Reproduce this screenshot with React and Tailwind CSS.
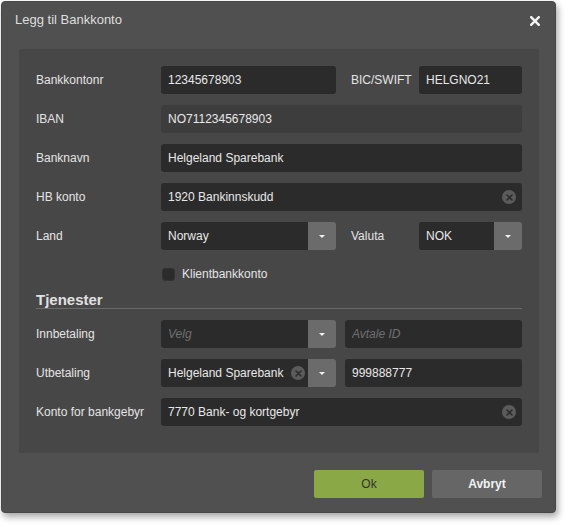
import React from "react";

function ClearIcon() {
  return (
    <span className="flex h-[14px] w-[14px] shrink-0 items-center justify-center rounded-full bg-[#5b5b5b]">
      <svg width="7" height="7" viewBox="0 0 7 7">
        <path d="M1 1L6 6M6 1L1 6" stroke="#2c2c2c" strokeWidth="1.6" strokeLinecap="round" />
      </svg>
    </span>
  );
}

function Caret() {
  return (
    <span className="h-0 w-0 border-l-[3px] border-r-[3px] border-t-[3px] border-l-transparent border-r-transparent border-t-[#f0f0f0]" />
  );
}

function Input({ value, placeholder, className = "", disabled = false, clear = false }) {
  return (
    <div
      className={`flex h-[28px] items-center rounded-[3px] pl-[7px] pr-[6px] ${
        disabled ? "bg-[#3d3d3d]" : "bg-[#2b2b2b]"
      } ${className}`}
    >
      {value ? (
        <span className="flex-1 truncate text-[12px] text-[#e8e8e8]">{value}</span>
      ) : (
        <span className="flex-1 truncate text-[12px] italic text-[#707070]">{placeholder}</span>
      )}
      {clear && <ClearIcon />}
    </div>
  );
}

function Select({ value, placeholder, className = "", clear = false }) {
  return (
    <div className={`flex h-[28px] overflow-hidden rounded-[3px] ${className}`}>
      <div className="flex flex-1 items-center bg-[#2b2b2b] pl-[7px] pr-[3px]">
        {value ? (
          <span className="flex-1 truncate text-[12px] text-[#e8e8e8]">{value}</span>
        ) : (
          <span className="flex-1 truncate text-[12px] italic text-[#707070]">{placeholder}</span>
        )}
        {clear && <ClearIcon />}
      </div>
      <div className="flex w-[28px] shrink-0 items-center justify-center bg-[#6b6b6b]">
        <Caret />
      </div>
    </div>
  );
}

function Row({ label, children, className = "" }) {
  return (
    <div className={`flex h-[28px] items-center ${className}`}>
      <div className="mb-[1px] w-[125px] shrink-0 text-[12px] text-[#e4e4e4]">{label}</div>
      <div className="flex flex-1 items-center">{children}</div>
    </div>
  );
}

export default function App() {
  return (
    <div className="h-[527px] w-[570px] bg-white pl-[1px] pt-[1px] font-['Liberation_Sans',Arial,sans-serif]">
      <div className="flex h-[512px] w-[555px] flex-col rounded-[4px] border border-[#474747] bg-[#505050] shadow-[2px_4px_7px_rgba(0,0,0,0.35)]">
        <div className="flex h-[47px] shrink-0 items-start justify-between pl-[13px] pr-[15px] pt-[9px]">
          <span className="text-[13px] leading-[18px] text-[#dedede]">Legg til Bankkonto</span>
          <svg width="10" height="10" viewBox="0 0 10 10" className="mt-[5px]">
            <path d="M1.2 1.2L8.8 8.8M8.8 1.2L1.2 8.8" stroke="#f2f2f2" strokeWidth="2.4" strokeLinecap="square" />
          </svg>
        </div>

        <div className="ml-[17px] w-[520px] rounded-[2px] bg-[#474747] px-[17px] pb-[27px] pt-[17px]">
          <div className="flex flex-col gap-[11px]">
            <Row label="Bankkontonr">
              <Input value="12345678903" className="w-[175px]" />
              <div className="mb-[1px] ml-[15px] w-[68px] text-[12px] text-[#e4e4e4]">BIC/SWIFT</div>
              <Input value="HELGNO21" className="flex-1" />
            </Row>
            <Row label="IBAN">
              <Input value="NO7112345678903" className="flex-1" disabled />
            </Row>
            <Row label="Banknavn">
              <Input value="Helgeland Sparebank" className="flex-1" />
            </Row>
            <Row label="HB konto">
              <Input value="1920 Bankinnskudd" className="flex-1" clear />
            </Row>
            <Row label="Land">
              <Select value="Norway" className="w-[175px]" />
              <div className="mb-[1px] ml-[15px] w-[68px] text-[12px] text-[#e4e4e4]">Valuta</div>
              <Select value="NOK" className="flex-1" />
            </Row>
          </div>

          <div className="mt-[14px] flex h-[20px] items-center pl-[126px]">
            <span className="h-[13px] w-[13px] rounded-[3px] border border-[#333333] bg-[#2b2b2b]" />
            <span className="ml-[7px] text-[12px] text-[#e4e4e4]">Klientbankkonto</span>
          </div>

          <div className="mt-[8px] border-b border-[#6a6a6a] text-[15px] font-bold leading-[16px] text-[#e0e0e0]">
            Tjenester
          </div>

          <div className="mt-[11px] flex flex-col gap-[11px]">
            <Row label="Innbetaling">
              <Select placeholder="Velg" className="w-[175px]" />
              <Input placeholder="Avtale ID" className="ml-[9px] flex-1" />
            </Row>
            <Row label="Utbetaling">
              <Select value="Helgeland Sparebank" className="w-[175px]" clear />
              <Input value="999888777" className="ml-[9px] flex-1" />
            </Row>
            <Row label="Konto for bankgebyr">
              <Input value="7770 Bank- og kortgebyr" className="flex-1" clear />
            </Row>
          </div>
        </div>

        <div className="flex justify-end gap-[8px] pr-[13px] pt-[17px]">
          <button className="h-[28px] w-[110px] rounded-[2px] bg-[#8aa845] text-[12px] text-[#333333]">Ok</button>
          <button className="h-[28px] w-[110px] rounded-[2px] bg-[#666666] text-[12px] font-bold text-[#f2f2f2]">Avbryt</button>
        </div>
      </div>
    </div>
  );
}
